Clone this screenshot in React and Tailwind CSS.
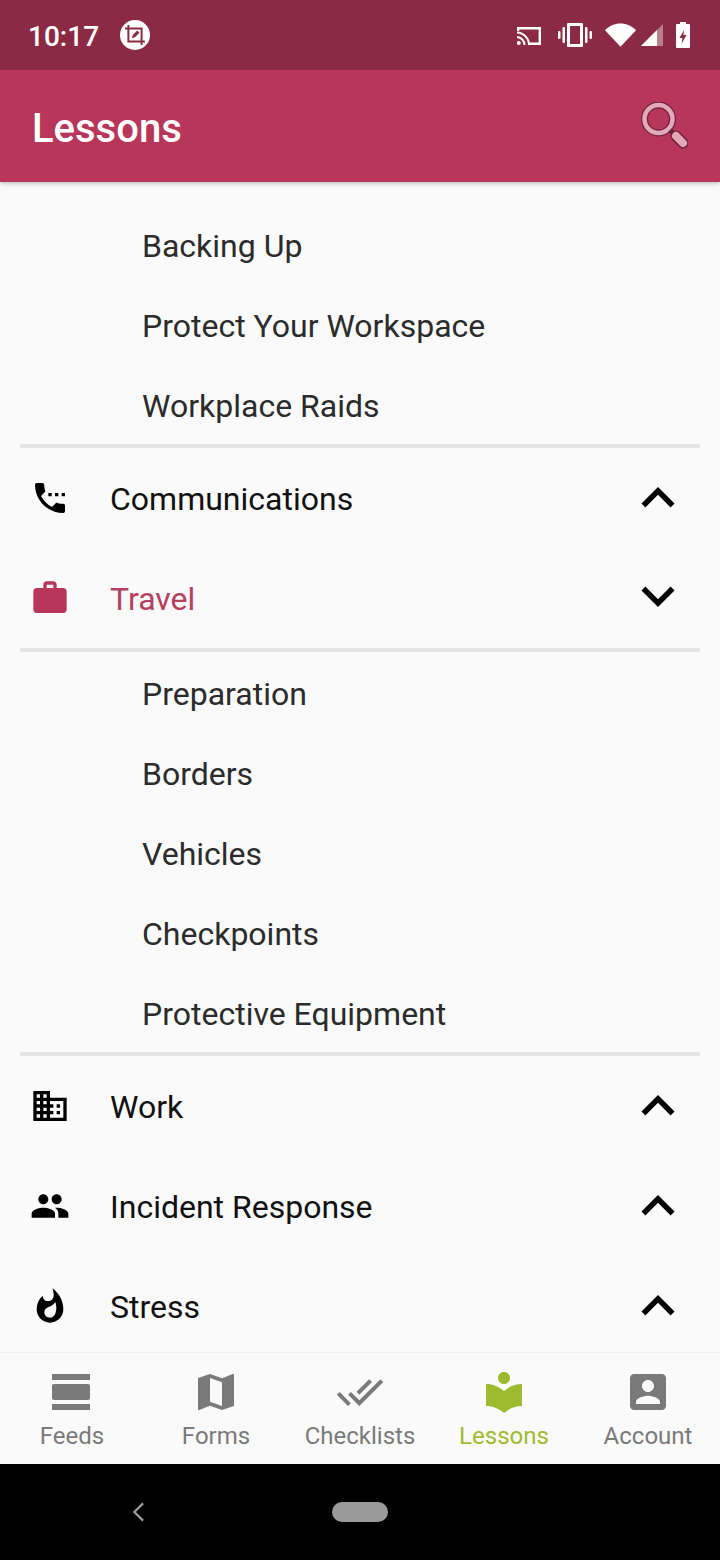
import React from 'react';

const ICONS = {
  phone: 'M13 9h-2v2h2V9zm4 0h-2v2h2V9zm3 6.5c-1.25 0-2.45-.2-3.57-.57-.35-.11-.74-.03-1.02.24l-2.2 2.2c-2.83-1.44-5.15-3.75-6.59-6.58l2.2-2.21c.28-.27.36-.66.25-1.01C8.7 6.45 8.5 5.25 8.5 4c0-.55-.45-1-1-1H4c-.55 0-1 .45-1 1 0 9.39 7.61 17 17 17 .55 0 1-.45 1-1v-3.5c0-.55-.45-1-1-1zM19 9v2h2V9h-2z',
  work: 'M20 6h-4V4c0-1.11-.89-2-2-2h-4c-1.11 0-2 .89-2 2v2H4c-1.11 0-1.99.89-1.99 2L2 19c0 1.11.89 2 2 2h16c1.11 0 2-.89 2-2V8c0-1.11-.89-2-2-2zm-6 0h-4V4h4v2z',
  domain: 'M12 7V3H2v18h20V7H12zM6 19H4v-2h2v2zm0-4H4v-2h2v2zm0-4H4V9h2v2zm0-4H4V5h2v2zm4 12H8v-2h2v2zm0-4H8v-2h2v2zm0-4H8V9h2v2zm0-4H8V5h2v2zm10 12h-8v-2h2v-2h-2v-2h2v-2h-2V9h8v10zm-2-8h-2v2h2v-2zm0 4h-2v2h2v-2z',
  people: 'M16 11c1.66 0 2.99-1.34 2.99-3S17.66 5 16 5c-1.66 0-3 1.34-3 3s1.34 3 3 3zm-8 0c1.66 0 2.99-1.34 2.99-3S9.66 5 8 5C6.34 5 5 6.34 5 8s1.34 3 3 3zm0 2c-2.33 0-7 1.17-7 3.5V19h14v-2.5c0-2.33-4.67-3.5-7-3.5zm8 0c-.29 0-.62.02-.97.05 1.16.84 1.97 1.97 1.97 3.45V19h6v-2.5c0-2.33-4.67-3.5-7-3.5z',
  flame: 'M13.5 1.4s.74 2.2.74 4.2c0 2.06-1.35 3.5-3.41 3.5-2.07 0-3.2-1.4-3.2-3.2C5.2 8 4 10.8 4 14c0 4.42 3.58 8 8 8s8-3.58 8-8C20 8.8 17.4 4.400 13.5 1.400zM12 19c-2 0-3.400-1.400-3.400-3.200 0-1.700 1.200-2.700 2.900-3.300 1.700-.6 3-1.700 3.600-3.100.6 1.600.7 3 .7 3.600 0 3.500-1.500 6-3.800 6z',
  less: 'M12 8l-6 6 1.41 1.41L12 10.83l4.59 4.58L18 14z',
  more: 'M16.59 8.59L12 13.17 7.41 8.59 6 10l6 6 6-6z',
  feeds: 'M2 21h19v-3H2v3zM20 8H3c-.55 0-1 .45-1 1v6c0 .55.45 1 1 1h17c.55 0 1-.45 1-1V9c0-.55-.45-1-1-1zM2 3v3h19V3H2z',
  map: 'M20.5 3l-.16.03L15 5.1 9 3 3.36 4.9c-.21.07-.36.25-.36.48V20.5c0 .28.22.5.5.5l.16-.03L9 18.9l6 2.1 5.64-1.9c.21-.07.36-.25.36-.48V3.5c0-.28-.22-.5-.5-.5zM15 19l-6-2.11V5l6 2.11V19z',
  check: 'M18 7l-1.41-1.41-6.34 6.34 1.41 1.41L18 7zm4.24-1.41L11.66 16.17 7.48 12l-1.41 1.41L11.66 19l12-12-1.42-1.41zM.41 13.41L6 19l1.41-1.41L1.83 12 .41 13.41z',
  library: 'M12 11.55C9.64 9.35 6.48 8 3 8v11c3.48 0 6.64 1.35 9 3.55 2.36-2.19 5.52-3.55 9-3.55V8c-3.48 0-6.64 1.35-9 3.55zM12 8c1.66 0 3-1.34 3-3s-1.34-3-3-3-3 1.34-3 3 1.34 3 3 3z',
  account: 'M3 5v14c0 1.1.89 2 2 2h14c1.1 0 2-.9 2-2V5c0-1.1-.9-2-2-2H5c-1.11 0-2 .9-2 2zm12 4c0 1.66-1.34 3-3 3s-3-1.34-3-3 1.34-3 3-3 3 1.34 3 3zm-9 8c0-2 4-3.1 6-3.1s6 1.1 6 3.1v1H6v-1z',
};

const Icon = ({ name, className }) => (
  <svg viewBox="0 0 24 24" fill="currentColor" fillRule="evenodd" className={className}>
    <path d={ICONS[name]} />
  </svg>
);

const SubList = ({ items, className }) => (
  <div className={`flex flex-col gap-10 pl-[142px] text-[32px] leading-10 text-[#2b2b2b] ${className}`}>
    {items.map((item) => (
      <div key={item}>{item}</div>
    ))}
  </div>
);

const Section = ({ icon, label, open, active }) => (
  <div className={`flex h-[100px] items-center ${active ? 'text-[#b3405f]' : 'text-[#111111]'}`}>
    <div className="flex w-[110px] shrink-0 pl-[30px]">
      <Icon name={icon} className={`h-10 w-10 ${active ? 'text-[#b73659]' : 'text-black'}`} />
    </div>
    <div className="mt-[2px] flex-1 text-[32px] leading-10">{label}</div>
    <Icon name={open ? 'more' : 'less'} className={`mr-[29px] h-[66px] w-[66px] text-black ${open ? '-mt-1' : ''}`} />
  </div>
);

const Divider = () => <div className="mx-5 h-1 bg-[#e4e4e4]" />;

const tabs = [
  { icon: 'feeds', label: 'Feeds' },
  { icon: 'map', label: 'Forms' },
  { icon: 'check', label: 'Checklists' },
  { icon: 'library', label: 'Lessons', active: true },
  { icon: 'account', label: 'Account' },
];

const StatusIcons = () => (
  <div className="flex items-center text-white">
    <svg viewBox="0 0 24 18" className="mr-[17px] mt-[1px] h-[18px] w-[24px]" fill="none" stroke="white" strokeWidth="2.400">
      <path d="M1 4V1.200h21.800v15.600H12" />
      <path d="M0 5.500a12.500 12.500 0 0 1 12 12.500M0 10a8 8 0 0 1 7.500 8" strokeWidth="2" />
      <circle cx="1.800" cy="16" r="2" fill="white" stroke="none" />
    </svg>
    <svg viewBox="0 0 34 24" className="mr-[13px] h-[24px] w-[34px]" fill="white">
      <path fillRule="evenodd" d="M10 0h14a1 1 0 0 1 1 1v22a1 1 0 0 1-1 1H10a1 1 0 0 1-1-1V1a1 1 0 0 1 1-1zm2 3v18h10V3z" />
      <rect x="4.500" y="4" width="2.500" height="16" rx="1" />
      <rect x="27" y="4" width="2.500" height="16" rx="1" />
      <rect x="0" y="8" width="2.500" height="8" rx="1" />
      <rect x="31.500" y="8" width="2.500" height="8" rx="1" />
    </svg>
    <svg viewBox="0 0 32 24" className="mr-[5px] h-[24px] w-[31px]" fill="white">
      <path d="M16 24 0 7C4 2.500 10 0 16 0s12 2.500 16 7z" />
    </svg>
    <svg viewBox="0 0 22 22" className="mr-[13px] h-[22px] w-[22px]">
      <path d="M22 0v22H0z" fill="white" fillOpacity="0.4" />
      <path d="M16 6v16H0z" fill="white" />
    </svg>
    <svg viewBox="0 0 14 26" className="h-[26px] w-[14px]" fill="white">
      <path fillRule="evenodd" d="M4 0h6v2h3a1 1 0 0 1 1 1v22a1 1 0 0 1-1 1H1a1 1 0 0 1-1-1V3a1 1 0 0 1 1-1h3zM8 8l-4.500 8H6.500l-1 6 5-9H7.500z" />
    </svg>
  </div>
);

const App = () => {
  return (
    <div className="flex h-[1560px] w-[720px] flex-col overflow-hidden bg-[#fafafa] font-['Roboto',sans-serif]">
      <div className="flex h-[70px] shrink-0 items-center justify-between bg-[#8b2a45] pl-[28px] pr-[30px] text-white">
        <div className="flex items-center">
          <span className="pt-[3px] text-[28px] font-medium leading-none">10:17</span>
          <div className="ml-[21px] flex h-[30px] w-[30px] items-center justify-center rounded-full bg-white">
            <svg viewBox="0 0 20 20" className="h-[22px] w-[22px]" fill="none" stroke="#8b2a45" strokeWidth="1.800">
              <path d="M1 4h15v15M4 1v15h15" />
              <path d="M7 13l1-3 4-4 2 2-4 4z" fill="#8b2a45" stroke="none" />
            </svg>
          </div>
        </div>
        <StatusIcons />
      </div>

      <div className="z-10 flex h-[112px] shrink-0 items-center justify-between bg-[#b73659] pl-[32px] pr-[32px] shadow-[0_2px_4px_rgba(0,0,0,0.2)]">
        <h1 className="pt-[6px] text-[40px] font-medium leading-none text-white">Lessons</h1>
        <svg viewBox="0 0 48 48" className="h-12 w-12">
          <circle cx="18.500" cy="17" r="14" fill="none" stroke="#6f2440" strokeWidth="7" />
          <circle cx="18.500" cy="17" r="14" fill="none" stroke="#e3a9bb" strokeWidth="4.500" />
          <path d="M30 28l5 5" stroke="#6f2440" strokeWidth="5" />
          <path d="M36 34l7 7" stroke="#6f2440" strokeWidth="11" strokeLinecap="round" />
          <path d="M36 34l7 7" stroke="#e3a9bb" strokeWidth="8" strokeLinecap="round" />
        </svg>
      </div>

      <div className="flex-1 overflow-hidden">
        <SubList items={['Backing Up', 'Protect Your Workspace', 'Workplace Raids']} className="pb-[18px] pt-11" />
        <Divider />
        <Section icon="phone" label="Communications" />
        <Section icon="work" label="Travel" open active />
        <Divider />
        <SubList items={['Preparation', 'Borders', 'Vehicles', 'Checkpoints', 'Protective Equipment']} className="pb-[18px] pt-[22px]" />
        <Divider />
        <Section icon="domain" label="Work" />
        <Section icon="people" label="Incident Response" />
        <Section icon="flame" label="Stress" />
      </div>

      <div className="grid h-[112px] shrink-0 grid-cols-5 border-t border-[#f2f2f2] bg-[#fafafa]">
        {tabs.map((tab) => (
          <div key={tab.label} className={`flex flex-col items-center pt-[15px] ${tab.active ? 'text-[#9dbb2e]' : 'text-[#7a7a7a]'}`}>
            <Icon name={tab.icon} className="h-12 w-12" />
            <span className="mt-[6px] text-[24px] leading-7">{tab.label}</span>
          </div>
        ))}
      </div>

      <div className="relative flex h-[96px] shrink-0 items-center justify-center bg-black">
        <svg viewBox="0 0 14 22" className="absolute left-[132px] top-[38px] h-[20px] w-[13px]" fill="none" stroke="#9a9a9a" strokeWidth="2.500">
          <path d="M12 1.500 2.500 11l9.500 9.500" />
        </svg>
        <div className="h-5 w-14 rounded-full bg-[#9a9a9a]" />
      </div>
    </div>
  );
};

export default App;
